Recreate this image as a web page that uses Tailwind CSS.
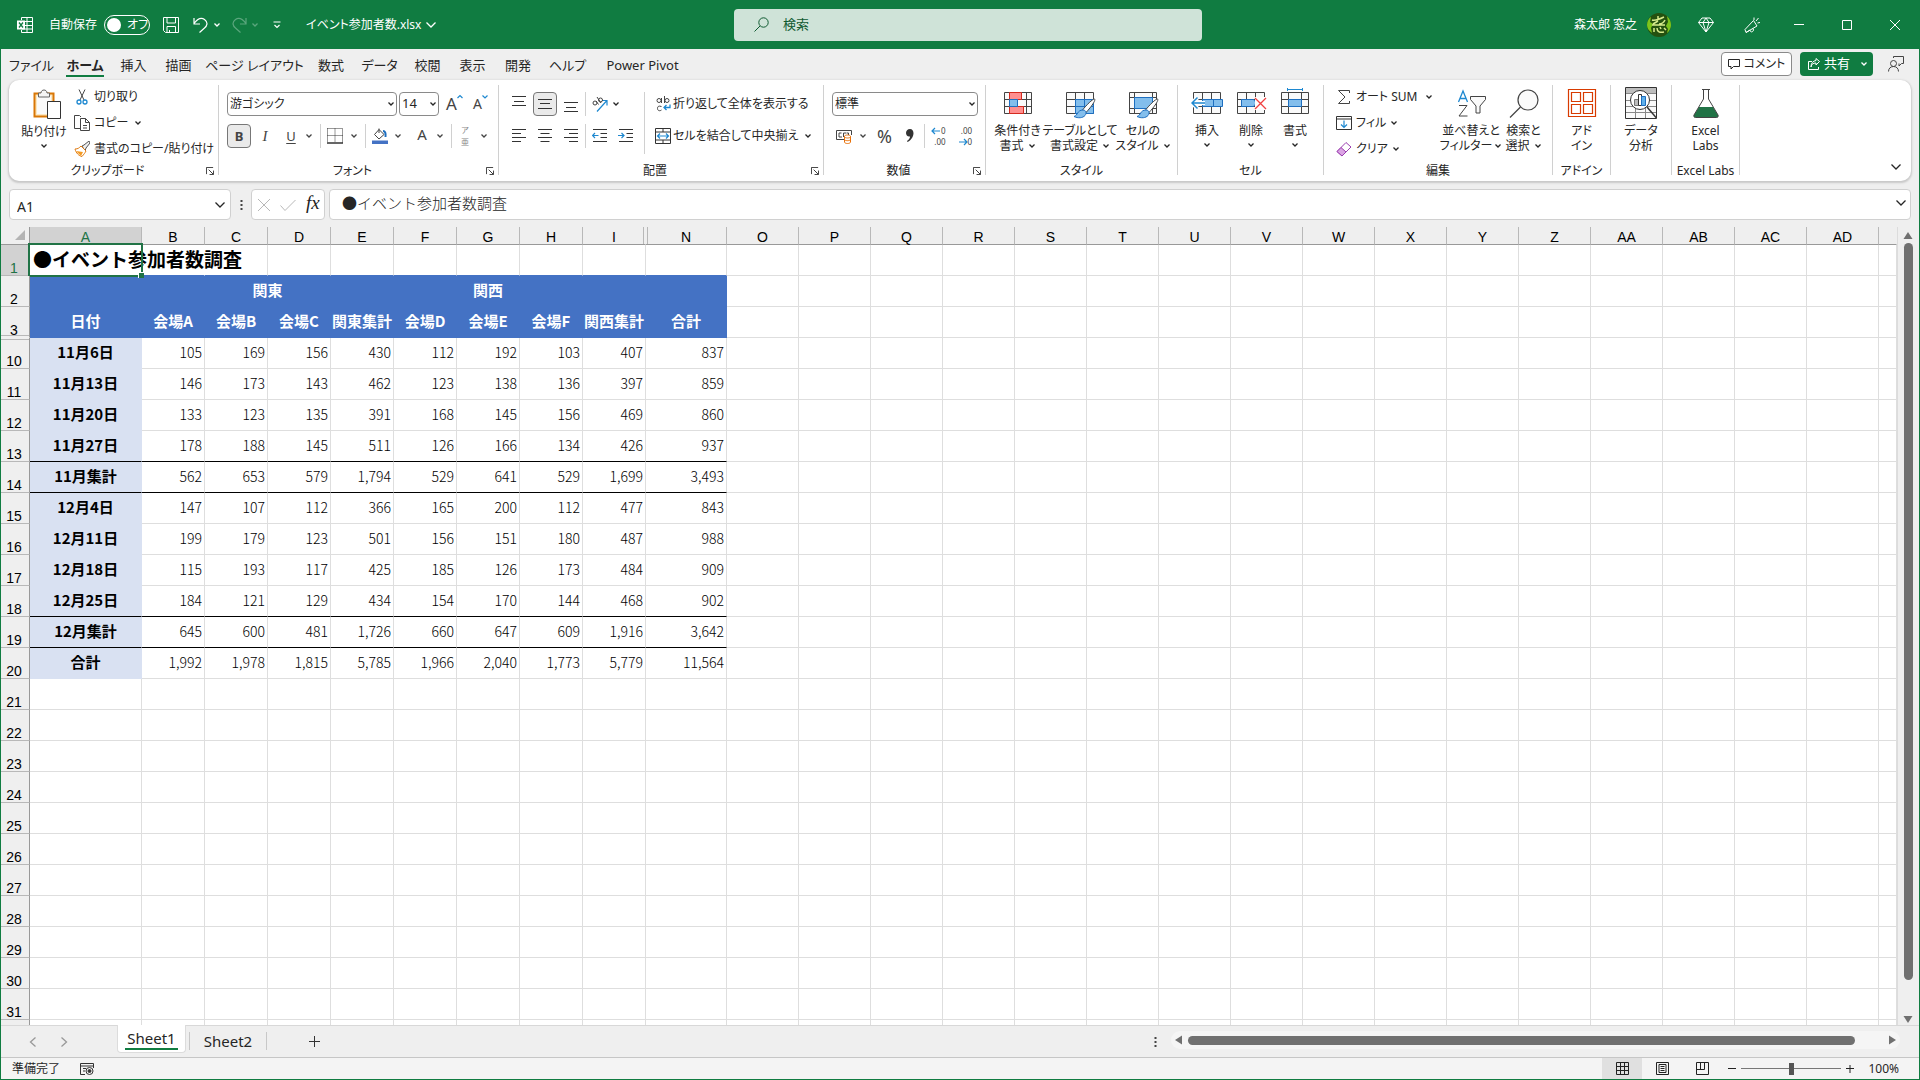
<!DOCTYPE html>
<html lang="ja">
<head>
    <meta charset="UTF-8">
    <meta name="viewport" content="width=device-width, initial-scale=1.0">
    <title>イベント参加者数.xlsx - Excel</title>
    <script src="https://cdn.jsdelivr.net/npm/@tailwindcss/browser@4"></script>
</head>
<body class="h-screen overflow-hidden bg-[#efefef] font-['Noto_Sans','Noto_Sans_CJK_JP',sans-serif] text-xs text-[#262626] [font-feature-settings:'palt'] whitespace-nowrap">

<!-- shared symbols -->
<svg class="hidden">
    <symbol id="chev" viewBox="0 0 8 8"><path d="M1.5 2.5 4 5l2.5-2.5" fill="none" stroke="currentColor" stroke-width="1.3"/></symbol>
    <symbol id="chev-lg" viewBox="0 0 12 12"><path d="M1.500 3.500 6 8l4.500-4.500" fill="none" stroke="currentColor" stroke-width="1.3"/></symbol>
    <symbol id="launcher" viewBox="0 0 9 9"><path d="M.5 8V.5H8M3 3l5 5M8.500 4v4.500H4" fill="none" stroke="currentColor"/></symbol>
</svg>

<div class="flex h-full flex-col border-x border-b border-[#107c41]">

    <!-- title bar -->
    <header class="flex h-[49px] shrink-0 items-center bg-[#107c41] text-white [&>*]:shrink-0">
        <div class="flex w-[733px] items-center pl-4">
            <svg class="size-4" viewBox="0 0 16 16" fill="none" stroke="#fff"><path d="M4.500 3V.5h11v15h-11V13M10 .5v15M4.500 4.500h11M8 8.500h7.500M4.500 12h11"/><path d="M0 3.500h8v9H0z" fill="#fff" stroke="none"/><path d="m2 5.500 4 5M6 5.500l-4 5" stroke="#107c41" stroke-width="1.3"/></svg>
            <label class="ml-4 flex items-center gap-[7px]">自動保存
                <input type="checkbox" class="peer sr-only">
                <span class="flex h-5 w-[46px] items-center gap-1.5 rounded-full border border-white pl-[2px]"><span class="size-3.5 rounded-full bg-white"></span>オフ</span>
            </label>
            <button aria-label="上書き保存" class="ml-[13px]"><svg class="size-4" viewBox="0 0 16 16" fill="none" stroke="#fff"><path d="M.5.5h15v15h-13l-2-2zM4 .5V6h8.500V.5M4 15.500V9.500h8.500v6M6.500 15.500V13"/></svg></button>
            <button aria-label="元に戻す" class="ml-3.5 flex items-center gap-1"><svg class="h-4 w-4" viewBox="0 0 16 16" fill="none" stroke="#fff" stroke-width="1.200"><path d="M1 1v6h6M1 6.500C4 2.500 8 0 11.500 2.500c4 3 2.500 6.500 0 8.500L6.500 15.500"/></svg><svg class="size-2"><use href="#chev"/></svg></button>
            <button aria-label="やり直し" class="ml-2.5 flex items-center gap-1 text-[#5ba67d]"><svg class="h-4 w-4" viewBox="0 0 16 16" fill="none" stroke="currentColor" stroke-width="1.200"><path d="M15 1v6H9M15 6.500C12 2.500 8 0 4.500 2.500c-4 3-2.500 6.500 0 8.500l5 4.500"/></svg><svg class="size-2"><use href="#chev"/></svg></button>
            <button aria-label="クイック アクセス ツール バーのカスタマイズ" class="ml-3.5"><svg class="h-2 w-2" viewBox="0 0 8 8" fill="none" stroke="#fff" stroke-width="1.200"><path d="M.5 1h7M1.500 4 4 6.500 6.500 4"/></svg></button>
            <button class="ml-[25px] flex items-center gap-1">イベント参加者数.xlsx<svg class="size-3"><use href="#chev-lg"/></svg></button>
        </div>
        <label class="flex h-8 w-[468px] items-center rounded bg-[#cfe3d8] pl-5 text-[#0f5a31]">
            <svg class="size-[15px]" viewBox="0 0 15 15" fill="none" stroke="currentColor"><circle cx="9.500" cy="5.500" r="4.700"/><path d="M6 9 .5 14.500"/></svg>
            <input type="text" aria-label="検索" placeholder="検索" class="ml-3.5 grow bg-transparent text-[13px] outline-none placeholder:text-[#0f5a31]">
        </label>
        <div class="ml-auto flex items-center pr-[19px]">
            <span>森太郎 窓之</span>
            <svg class="ml-2.5 size-6" viewBox="0 0 24 24"><circle cx="12" cy="12" r="12" fill="#24510f"/><path d="M0 12c0-4 2-7 4-8l-1 5 3 2-2 4 1 5C2 18 0 15 0 12zM20 3c3 3 4 6 4 9s-2 7-4 8l1-4-2-3 2-4z" fill="#7cc41c"/><path d="M5 7c4 1 8-1 12-3M11 3v4M6 11l5-3M12 11c3 0 5-2 6-4M5 12h13M7 15v4M10 15c0 4 3 5 7 4M13 14l1 2M17 15l2 2" stroke="#d6ea8c" stroke-width="1.500" fill="none"/></svg>
            <button aria-label="Premium" class="ml-[27px]"><svg class="size-4" viewBox="0 0 16 16" fill="none" stroke="#fff"><path d="M4 1h8l3.500 4.500L8 15 .5 5.500zM.5 5.500h15M5 5.500 8 15l3-9.500L8 1 5 5.500z"/></svg></button>
            <button aria-label="新機能" class="ml-[30px]"><svg class="size-4" viewBox="0 0 16 16" fill="none" stroke="#fff"><path d="M9.500 3.500 1 12.500l1 3 11-6.500zM2 15.500l4-2.500c0 2.500 3 2.500 3.500 0l-.5-1.500M10 3V.5M12 4l2.500-3M13.500 6l2.500-.5"/></svg></button>
            <button aria-label="最小化" class="ml-[34px]"><svg class="size-2.5" viewBox="0 0 10 10"><path d="M0 4.500h10" stroke="#fff"/></svg></button>
            <button aria-label="最大化" class="ml-[38px]"><svg class="size-2.5" viewBox="0 0 10 10"><path d="M.5.5h9v9h-9z" stroke="#fff" fill="none"/></svg></button>
            <button aria-label="閉じる" class="ml-[38px]"><svg class="size-2.5" viewBox="0 0 10 10"><path d="m0 0 10 10M10 0 0 10" stroke="#fff"/></svg></button>
        </div>
    </header>

    <!-- ribbon tabs -->
    <nav class="flex h-[31px] shrink-0 items-start pl-[3px] pt-[3px] text-[13px]">
        <div class="flex pt-px leading-6 [&>a]:text-center">
            <a href="#" class="w-[55px]">ファイル</a>
            <a href="#" class="flex w-[52px] justify-center font-bold"><span class="h-6 border-b-2 border-[#107c41]">ホーム</span></a>
            <a href="#" class="w-[45px]">挿入</a>
            <a href="#" class="w-[45px]">描画</a>
            <a href="#" class="w-[107px]">ページ レイアウト</a>
            <a href="#" class="w-[46px]">数式</a>
            <a href="#" class="w-[51px]">データ</a>
            <a href="#" class="w-[45px]">校閲</a>
            <a href="#" class="w-[45px]">表示</a>
            <a href="#" class="w-[46px]">開発</a>
            <a href="#" class="w-[53px]">ヘルプ</a>
            <a href="#" class="w-[97px]">Power Pivot</a>
        </div>
        <div class="ml-auto flex items-center pr-[15px] text-xs">
            <button class="flex h-6 w-[71px] items-center justify-center gap-1 rounded border border-[#8a8a8a] bg-white"><svg class="size-3" viewBox="0 0 12 12" fill="none" stroke="currentColor"><path d="M.5 1.500h11v7H5.500L3 11V8.500H.5z"/></svg>コメント</button>
            <button class="ml-2 flex h-6 w-[73px] items-center gap-1 rounded bg-[#107c41] pl-2 text-[13px] text-white"><svg class="size-3" viewBox="0 0 12 12" fill="none" stroke="#fff"><path d="M4 3.500H.5v8h10V9M3 9c.5-3 2-4 5-4V7l3.500-3.500L8 .5v2C5 3 3 5 3 9z"/></svg>共有<svg class="ml-1.5 size-2"><use href="#chev"/></svg></button>
            <button aria-label="ユーザー" class="ml-[15px]"><svg class="size-4" viewBox="0 0 16 16" fill="none" stroke="#444"><circle cx="5.500" cy="7.500" r="3"/><path d="M.5 15.500c0-3 2-5 5-5s5 2 5 5M5.500 2V.5h10v7h-2L11 10V7.500"/></svg></button>
        </div>
    </nav>

    <!-- ribbon -->
    <section class="mx-2 flex h-[101px] shrink-0 rounded-[10px] bg-white shadow-[0_1px_2px_1px_#c8c8c8] [&>hr]:mt-[5px] [&>hr]:h-[90px] [&>hr]:w-px [&>hr]:border-0 [&>hr]:bg-[#d0d0d0] [&_button]:shrink-0">

        <!-- clipboard -->
        <div class="flex w-[209px] flex-col pt-1">
            <div class="flex h-[78px]">
                <button class="flex w-14 flex-col items-center pl-3.5 pt-[5px] leading-4">
                    <svg class="ml-1.5 h-[31px] w-7 shrink-0" viewBox="0 0 28 31"><path d="M1.500 4.500h19v23h-19z" fill="#fce8c0" stroke="#d97706" stroke-width="2"/><path d="M4 7h14v18H4z" fill="#fafafa"/><path d="M5.500 8V4H8c0-4 6-4 6 0h2.500v4z" fill="#f5f5f5" stroke="#666"/><path d="M14.500 12.500h13v17h-13z" fill="#fff" stroke="#333"/></svg>
                    <span class="mt-1">貼り付け</span>
                    <svg class="mt-0.5 size-2 shrink-0"><use href="#chev"/></svg>
                </button>
                <div class="ml-[9px] flex flex-col [&>button]:flex [&>button]:h-[26px] [&>button]:items-center">
                    <button><svg class="mr-1 size-4" viewBox="0 0 16 16" fill="none" stroke="#444"><path d="m5 .5 5 10.500M11 .5 6 11"/><g stroke="#1e88d0" stroke-width="1.300"><circle cx="5" cy="13" r="2"/><circle cx="11" cy="13" r="2"/></g></svg>切り取り</button>
                    <button><svg class="mr-1 size-4" viewBox="0 0 16 16" fill="#fff" stroke="#444"><path d="M6 13.500H.5V.5h5L7 2"/><path d="M6.500 3.500h5l4 4v8h-9zM11.500 3.500v4h4M9 10.500h4M9 13h4"/></svg>コピー<svg class="ml-1.5 size-2"><use href="#chev"/></svg></button>
                    <button><svg class="mr-1 size-4" viewBox="0 0 16 16" fill="none"><path d="m8 5 2-1 5-4 1 2-4 5-1 3z" fill="#eee" stroke="#555"/><path d="M1 8c3 0 4-1 6-3l5 5c-1 2-2 3-4 5.500C5 15 2 12 1 8z" fill="#fff" stroke="#e07a10"/><path d="m2 10 7 1-2 4z" fill="#f59a23"/></svg>書式のコピー/貼り付け</button>
                </div>
            </div>
            <div class="flex items-center pr-1 leading-[18px]"><span class="grow text-center">クリップボード</span><svg class="size-2"><use href="#launcher"/></svg></div>
        </div>
        <hr>

        <!-- font -->
        <div class="flex w-[279px] flex-col pt-1">
            <div class="flex h-[78px] flex-col gap-2 pl-2 pt-2">
                <div class="flex h-6 items-center">
                    <div class="relative"><select aria-label="フォント" class="h-6 w-[170px] appearance-none rounded border border-[#8a8a8a] pl-0.5"><option>游ゴシック</option></select><svg class="absolute right-0.5 top-2 size-2"><use href="#chev"/></svg></div>
                    <div class="relative ml-0.5"><select aria-label="フォント サイズ" class="h-6 w-10 appearance-none rounded border border-[#8a8a8a] pl-0.5 text-[13px]"><option>14</option></select><svg class="absolute right-0.5 top-2 size-2"><use href="#chev"/></svg></div>
                    <button class="ml-[7px] flex text-[17px] leading-5 text-[#444]">A<svg class="size-1.5" viewBox="0 0 6 6"><path d="m.5 4 2.500-2.500L5.500 4" fill="none" stroke="#1e88d0" stroke-width="1.200"/></svg></button>
                    <button class="ml-2.5 flex text-[14px] leading-5 text-[#444]">A<svg class="size-1.5" viewBox="0 0 6 6"><path d="M.5 1.500 3 4l2.500-2.500" fill="none" stroke="#1e88d0" stroke-width="1.200"/></svg></button>
                </div>
                <div class="flex h-6 items-center text-[#444] [&>i]:h-6 [&>i]:w-px [&>i]:bg-[#d0d0d0]">
                    <button class="h-6 w-6 rounded border border-[#777] bg-[#eaeaea] text-[13px] leading-5 font-bold">B</button>
                    <button class="ml-2.5 w-2 font-['Liberation_Serif'] text-[15px] leading-5 italic">I</button>
                    <button class="ml-[17px] w-2.5 text-[13px] leading-5 underline underline-offset-2">U</button>
                    <svg class="ml-[9px] size-2"><use href="#chev"/></svg>
                    <i class="ml-[7px]"></i>
                    <button aria-label="罫線" class="ml-1.5"><svg class="size-4" viewBox="0 0 16 16" fill="none" stroke="#333"><path d="M.5.5h15v14M.5.5v14M8 .5v14M.5 7.500h15" stroke-dasharray="1 1"/><path d="M0 15h16" stroke-width="1.500"/></svg></button>
                    <svg class="ml-[7px] size-2"><use href="#chev"/></svg>
                    <i class="ml-[7px]"></i>
                    <button aria-label="塗りつぶしの色" class="ml-1.5"><svg class="size-4" viewBox="0 0 16 16" fill="none"><path d="m7 1.500 5 5-5 4.500-4.500-4.500zM7 5V.5" stroke="#444"/><path d="M11 3c2 0 3 2 2.500 6" stroke="#1e6fc0" stroke-width="2"/><path d="M0 12.500h16V16H0z" fill="#4472c4"/></svg></button>
                    <svg class="ml-1.5 size-2"><use href="#chev"/></svg>
                    <button class="ml-3.5 w-3 pb-1 text-[15px] leading-5">A</button>
                    <svg class="ml-2 size-2"><use href="#chev"/></svg>
                    <i class="ml-[7px]"></i>
                    <button class="ml-1.5 flex w-3.5 flex-col items-center text-[8px] leading-3 text-[#888]"><span>ア</span><span>亜</span></button>
                    <svg class="ml-2 size-2"><use href="#chev"/></svg>
                </div>
            </div>
            <div class="flex items-center pr-1 leading-[18px]"><span class="grow text-center">フォント</span><svg class="size-2"><use href="#launcher"/></svg></div>
        </div>
        <hr>

        <!-- alignment -->
        <div class="flex w-[324px] flex-col pt-1">
            <div class="flex h-[78px] pt-2">
                <div class="flex w-[86px] flex-col gap-2">
                    <div class="flex h-6 items-center gap-0.5 pl-2 [&_svg]:size-4 [&>button]:flex [&>button]:size-6 [&>button]:items-center [&>button]:justify-center">
                        <button aria-label="上揃え"><svg viewBox="0 0 16 16" stroke="#333"><path d="M1 .5h14M3 5.500h10M1 9.500h14" /></svg></button>
                        <button aria-label="上下中央揃え" class="rounded border border-[#777] bg-[#eaeaea]"><svg viewBox="0 0 16 16" stroke="#333"><path d="M1 3.500h14M3 7.500h10M1 12.500h14"/></svg></button>
                        <button aria-label="下揃え"><svg viewBox="0 0 16 16" stroke="#333"><path d="M1 6.500h14M3 11.500h10M1 15.500h14"/></svg></button>
                    </div>
                    <div class="flex h-6 items-center gap-0.5 pl-2 [&_svg]:size-4 [&>button]:flex [&>button]:size-6 [&>button]:items-center [&>button]:justify-center">
                        <button aria-label="左揃え"><svg viewBox="0 0 16 16" stroke="#333"><path d="M1 1.500h14M1 5.500h9M1 9.500h14M1 13.500h9"/></svg></button>
                        <button aria-label="中央揃え"><svg viewBox="0 0 16 16" stroke="#333"><path d="M1 1.500h14M3.500 5.500h9M1 9.500h14M3.500 13.500h9"/></svg></button>
                        <button aria-label="右揃え"><svg viewBox="0 0 16 16" stroke="#333"><path d="M1 1.500h14M6 5.500h9M1 9.500h14M6 13.500h9"/></svg></button>
                    </div>
                </div>
                <div class="flex w-[59px] flex-col gap-2 [&>div]:border-l [&>div]:border-[#d0d0d0]">
                    <div class="flex h-6 items-center gap-1 pl-1.5"><button aria-label="方向"><svg class="size-4" viewBox="0 0 16 16" fill="none"><path d="M5 15.500 14.500 5M10 4.500h5v5" stroke="#1e88d0" stroke-width="1.200"/><g stroke="#444"><circle cx="3" cy="7" r="2"/><path d="m4 5 2.500 3.500M5 1l4 6"/><circle cx="8.500" cy="4" r="2"/></g></svg></button><svg class="size-2"><use href="#chev"/></svg></div>
                    <div class="flex h-6 items-center gap-2.5 pl-1.5">
                        <button aria-label="インデントを減らす"><svg class="size-4" viewBox="0 0 16 16" fill="none" stroke="#333"><path d="M1 1.500h14M8.500 5.500H15M8.500 9.500H15M1 13.500h14"/><path d="M6.500 7.500h-6M3 5 .5 7.500 3 10" stroke="#1e88d0" stroke-width="1.200"/></svg></button>
                        <button aria-label="インデントを増やす"><svg class="size-4" viewBox="0 0 16 16" fill="none" stroke="#333"><path d="M1 1.500h14M8.500 5.500H15M8.500 9.500H15M1 13.500h14"/><path d="M0 7.500h6M3.500 5 6 7.500 3.500 10" stroke="#1e88d0" stroke-width="1.200"/></svg></button>
                    </div>
                </div>
                <div class="flex h-[62px] grow flex-col gap-2 border-l border-[#d0d0d0] pl-2.5">
                    <button class="flex h-6 items-center gap-0.5"><svg class="size-4" viewBox="0 0 16 16" fill="none" stroke="#444"><circle cx="4" cy="4.500" r="2"/><path d="M6.500 2v5M9.500 0v7M6.500 10.500c-3-1-4 0-4 2s2 3 4 1.500"/><circle cx="12" cy="4.500" r="2"/><path d="M15 8.500v3H9M11.500 9 9 11.500l2.500 2.500" stroke="#1e88d0" stroke-width="1.300"/></svg>折り返して全体を表示する</button>
                    <button class="flex h-6 items-center gap-0.5"><svg class="size-4" viewBox="0 0 16 16" fill="none" stroke="#333"><path d="M.5.500h15v15H.5zM8 .5V4M8 12v3.500M.5 4h15M.5 12h15"/><path d="M2.500 8h11M5 5.500 2.500 8 5 10.500M11 5.500 13.500 8 11 10.500" stroke="#1e88d0" stroke-width="1.200"/></svg>セルを結合して中央揃え<svg class="ml-1 size-2"><use href="#chev"/></svg></button>
                </div>
            </div>
            <div class="flex items-center pr-1 leading-[18px]"><span class="grow text-center">配置</span><svg class="size-2"><use href="#launcher"/></svg></div>
        </div>
        <hr>

        <!-- number -->
        <div class="flex w-[161px] flex-col pt-1">
            <div class="flex h-[78px] flex-col gap-2 pl-2 pt-2">
                <div class="relative w-[146px]"><select aria-label="表示形式" class="h-6 w-full appearance-none rounded border border-[#8a8a8a] pl-0.5"><option>標準</option></select><svg class="absolute right-0.5 top-2 size-2"><use href="#chev"/></svg></div>
                <div class="flex h-6 items-center pl-1 text-[#444]">
                    <button aria-label="通貨表示形式"><svg class="size-4" viewBox="0 0 16 16" fill="none" stroke="#444"><path d="M8 11.500H.5v-9h15V7M5.500 5H3v4h3M7.500 9V5H10M12.500 7V5h-2"/><path d="M8.500 8.500c0-2 6-2 6 0v5.500c0 2-6 2-6 0zM8.500 8.500c0 2 6 2 6 0M8.500 11.500c0 1.500 6 1.500 6 0" fill="#fff" stroke="#e8710a"/></svg></button>
                    <svg class="ml-[7px] size-2"><use href="#chev"/></svg>
                    <button class="ml-2.5 text-[18px] leading-6">%</button>
                    <button aria-label="桁区切り" class="ml-3.5"><svg class="h-3.5 w-2" viewBox="0 0 8 14"><path d="M4 0c5 0 5 9-2.500 13l-.5-1c2-1.500 3-3 3-4.500C1.500 8 0 6 0 4s1.500-4 4-4z" fill="#333"/></svg></button>
                    <span class="ml-2.5 h-6 w-px bg-[#d0d0d0]"></span>
                    <button aria-label="小数点以下の表示桁数を増やす" class="ml-1.5 flex flex-col items-end text-[8px] leading-[11px]"><span class="flex items-center"><svg class="h-2 w-2.5" viewBox="0 0 10 8"><path d="M9 4H1M4 1 1 4l3 3" fill="none" stroke="#1e88d0" stroke-width="1.200"/></svg>0</span><span>.00</span></button>
                    <button aria-label="小数点以下の表示桁数を減らす" class="ml-3 flex flex-col items-end text-[8px] leading-[11px]"><span>.00</span><span class="flex items-center"><svg class="h-2 w-2.5" viewBox="0 0 10 8"><path d="M1 4h8M6 1l3 3-3 3" fill="none" stroke="#1e88d0" stroke-width="1.200"/></svg>0</span></button>
                </div>
            </div>
            <div class="flex items-center pr-1 leading-[18px]"><span class="grow text-center">数値</span><svg class="size-2"><use href="#launcher"/></svg></div>
        </div>
        <hr>

        <!-- styles -->
        <div class="flex w-[191px] flex-col pt-1">
            <div class="flex h-[78px] pl-0.5 [&>button]:flex [&>button]:flex-col [&>button]:items-center [&>button]:pt-1 [&>button]:leading-[15px]">
                <button class="w-[59px]">
                    <svg class="mb-[3px] h-8 w-8 shrink-0" viewBox="0 0 32 32" fill="none" stroke="#444"><path d="M2.500 4.500h27v21h-27zM2.500 11.500h27M2.500 18.500h27M7.500 4.500v21M24.500 4.500v21" fill="#fafafa"/><path d="M7.500 4.500h12v7h-12zM7.500 18.500h14v7h-14z" fill="#ff8f8f" stroke="#d42a1e"/><path d="M7.500 11.500h8v7h-8z" fill="#83beec" stroke="#1e6fc0"/></svg>
                    <span>条件付き</span><span class="flex items-center gap-1">書式<svg class="size-2"><use href="#chev"/></svg></span>
                </button>
                <button class="w-[66px]">
                    <svg class="mb-[3px] h-8 w-8 shrink-0" viewBox="0 0 32 32" fill="none" stroke="#444"><path d="M2.500 4.500h27v21h-27zM2.500 11.500h27M2.500 18.500h27M11.500 4.500v21M20.500 4.500v21" fill="#fafafa"/><path d="M11.500 11.500h18v14h-18zM11.500 18.500h18M20.500 11.500v14" fill="#83beec" stroke="#1e6fc0"/><path d="M30.500 11c2 1-5 10-9 14l-3-3c4-5 10-11 12-11z" fill="#fff"/><path d="M19 22c3 0 4 3 2 5.500-2 2.500-7 3-11 1 4-1 3-6.500 9-6.500z" fill="#83beec" stroke="#1e6fc0"/></svg>
                    <span>テーブルとして</span><span class="flex items-center gap-1">書式設定<svg class="size-2"><use href="#chev"/></svg></span>
                </button>
                <button class="w-[60px]">
                    <svg class="mb-[3px] h-8 w-8 shrink-0" viewBox="0 0 32 32" fill="none" stroke="#444"><path d="M2.500 4.500h27v21h-27zM2.500 9.500h27M2.500 20.500h27M7.500 4.500v21M25.500 4.500v21" fill="#fafafa"/><path d="M7.500 9.500h18v11h-18z" fill="#83beec" stroke="#1e6fc0"/><path d="M30.500 11c2 1-5 10-9 14l-3-3c4-5 10-11 12-11z" fill="#fff"/><path d="M19 22c3 0 4 3 2 5.500-2 2.500-7 3-11 1 4-1 3-6.500 9-6.500z" fill="#83beec" stroke="#1e6fc0"/></svg>
                    <span>セルの</span><span class="flex items-center gap-1">スタイル<svg class="size-2"><use href="#chev"/></svg></span>
                </button>
            </div>
            <div class="text-center leading-[18px]">スタイル</div>
        </div>
        <hr>

        <!-- cells -->
        <div class="flex w-[145px] flex-col pt-1">
            <div class="flex h-[78px] pl-[7px] [&>button]:flex [&>button]:w-11 [&>button]:flex-col [&>button]:items-center [&>button]:pt-1 [&>button]:leading-4">
                <button>
                    <svg class="mb-[3px] h-8 w-8 shrink-0" viewBox="0 0 32 32" fill="none" stroke="#444"><path d="M2.500 4.500h27v21h-27zM2.500 11.500h27M2.500 18.500h27M11.500 4.500v21M20.500 4.500v21" fill="#fafafa"/><path d="M11.500 11.500h20v7h-20zM22.500 11.500v7" fill="#83beec" stroke="#1e6fc0"/><path d="M14 15H1M6.500 9.500 1 15l5.500 5.500" stroke="#fff" stroke-width="4"/><path d="M14 15H1M6.500 9.500 1 15l5.500 5.500" stroke="#1e88d0" stroke-width="1.500"/></svg>
                    挿入<svg class="mt-0.5 size-2 shrink-0"><use href="#chev"/></svg>
                </button>
                <button>
                    <svg class="mb-[3px] h-8 w-8 shrink-0" viewBox="0 0 32 32" fill="none" stroke="#444"><path d="M2.500 4.500h27v21h-27zM2.500 11.500h27M2.500 18.500h27M11.500 4.500v7M20.500 4.500v7M11.500 18.500v7M20.500 18.500v7" fill="#fafafa"/><path d="M6.500 11.500h12l3 3.500-3 3.500h-12z" fill="#83beec" stroke="#1e6fc0"/><path d="M20 9h12v13H20z" fill="#fff" stroke="none"/><path d="m20 10 11 11M31 10 20 21" stroke="#f04040" stroke-width="1.300"/></svg>
                    削除<svg class="mt-0.5 size-2 shrink-0"><use href="#chev"/></svg>
                </button>
                <button>
                    <svg class="mb-[3px] h-8 w-8 shrink-0" viewBox="0 0 32 32" fill="none" stroke="#444"><path d="M2.500 4.500h27v21h-27zM2.500 11.500h27M2.500 18.500h27M9.500 4.500v21M22.500 4.500v21" fill="#fafafa"/><path d="M9.500 11.500h13v7h-13z" fill="#83beec" stroke="#1e6fc0"/><path d="M8.500 0v3M23.500 0v3M8.500 1.500h15" stroke="#1e88d0"/></svg>
                    書式<svg class="mt-0.5 size-2 shrink-0"><use href="#chev"/></svg>
                </button>
            </div>
            <div class="text-center leading-[18px]">セル</div>
        </div>
        <hr>

        <!-- editing -->
        <div class="flex w-[228px] flex-col pt-1">
            <div class="flex h-[78px] pl-3">
                <div class="flex w-[105px] flex-col [&>button]:flex [&>button]:h-[26px] [&>button]:items-center [&>button]:gap-1">
                    <button><svg class="size-4" viewBox="0 0 16 16" fill="none" stroke="#444"><path d="M13.500 4V1.500H2.500L9 8l-6.500 6.500h11V12"/></svg>オート SUM<svg class="ml-1 size-2"><use href="#chev"/></svg></button>
                    <button><svg class="size-4" viewBox="0 0 16 16" fill="none" stroke="#333"><path d="M.5 1.500h15v13H.5zM.5 4h15"/><path d="M8 5.500V12M5 9.500l3 3 3-3" stroke="#1e88d0" stroke-width="1.200"/></svg>フィル<svg class="size-2"><use href="#chev"/></svg></button>
                    <button><svg class="size-4" viewBox="0 0 16 16" fill="#fff" stroke="#9b3fb0"><path d="M10 1.500 15 6l-9 9-5-4.500z"/><path d="m5 6.500 5 4.500-4 4-5-4.500z" fill="#dba4e4"/></svg>クリア<svg class="size-2"><use href="#chev"/></svg></button>
                </div>
                <button class="flex w-[60px] flex-col items-center pt-1 leading-[15px]">
                    <svg class="mb-[3px] h-8 w-8 shrink-0" viewBox="0 0 32 32" fill="none" stroke="#444"><path d="m3.500 14 4.500-11 4.500 11M5 10.500h6" stroke="#1e88d0" stroke-width="1.300"/><path d="M4 17.500h8l-8 10.500h8.500"/><path d="M15.500 8.500h15v3L25 18v7h-4v-7l-5.500-6.500z" fill="#fafafa"/></svg>
                    <span>並べ替えと</span><span class="flex items-center gap-0.5">フィルター<svg class="size-2"><use href="#chev"/></svg></span>
                </button>
                <button class="flex w-[45px] flex-col items-center pt-1 leading-[15px]">
                    <svg class="mb-[3px] h-8 w-8 shrink-0" viewBox="0 0 32 32" fill="none" stroke="#444" stroke-width="1.200"><circle cx="20" cy="12" r="10" fill="#fafafa"/><path d="M12.500 19 2 29.500"/></svg>
                    <span>検索と</span><span class="flex items-center gap-1">選択<svg class="size-2"><use href="#chev"/></svg></span>
                </button>
            </div>
            <div class="text-center leading-[18px]">編集</div>
        </div>
        <hr>

        <!-- add-ins -->
        <div class="flex w-[57px] flex-col pt-1">
            <button class="flex h-[78px] flex-col items-center pt-1 leading-[15px]">
                <svg class="mb-[3px] h-8 w-8 shrink-0" viewBox="0 0 32 32" fill="none" stroke="#d83b01" stroke-width="1.200"><path d="M2.500 1.500h27v27h-27zM5.500 4.500h9v9h-9zM17.500 4.500h9v9h-9zM5.500 16.500h9v9h-9zM17.500 16.500h9v9h-9z"/></svg>
                <span>アド</span><span>イン</span>
            </button>
            <div class="text-center leading-[18px]">アドイン</div>
        </div>
        <hr>
        <div class="flex w-[60px] flex-col pt-1">
            <button class="flex h-[78px] flex-col items-center pt-[3px] leading-[15px]">
                <svg class="mb-1 h-8 w-8 shrink-0" viewBox="0 0 32 32" fill="none" stroke="#888"><path d="M.5.5h31v31H.5z" fill="#fafafa" stroke="#333"/><path d="M1 1h30v5H1z" fill="#bdbdbd" stroke="none"/><path d="M1 6.500h30M1 13.500h30M1 19.500h30M1 25.500h30M10.500 20v11M20.500 20v11"/><circle cx="15" cy="13" r="9.500" fill="#fff" stroke="#333"/><path d="m22 20 9.500 11" stroke="#333" stroke-width="1.500"/><path d="M9.500 12.500h4v6h-4z" fill="#bbb" stroke="#777"/><path d="M13.500 7.500h3v11h-3z" fill="#fff" stroke="#333"/><path d="M16.500 9.500h4v9h-4z" fill="#5fb0ea" stroke="#1e6fc0"/></svg>
                <span>データ</span><span>分析</span>
            </button>
        </div>
        <hr>
        <div class="flex w-[67px] flex-col pt-1">
            <button class="flex h-[78px] flex-col items-center pt-1 leading-[15px]">
                <svg class="mb-[3px] h-8 w-8 shrink-0" viewBox="0 0 32 32" fill="none"><path d="M9 19h14l5 8c.5 1.500 0 2.500-1.500 2.500h-21C4 29.500 3.500 28 4 27z" fill="#217346"/><path d="M12 1.500h8M13.500 1.500V11L4 27c-.5 1.500 0 2.500 1.500 2.500h21c1.500 0 2-1 1.500-2.500l-9.500-16V1.500" stroke="#444"/></svg>
                <span>Excel</span><span>Labs</span>
            </button>
            <div class="text-center leading-[18px]">Excel Labs</div>
        </div>
        <hr>
        <button aria-label="リボンを折りたたむ" class="ml-auto mr-[9px] flex items-end pb-2"><svg class="size-3"><use href="#chev-lg"/></svg></button>
    </section>

    <!-- formula bar -->
    <div class="mx-2 mt-2 flex h-[31px] shrink-0">
        <div class="flex w-[222px] items-center rounded border border-[#d0d0d0] bg-white pl-[7px] pr-1">
            <input aria-label="名前ボックス" value="A1" class="w-0 grow pt-1 text-sm outline-none">
            <svg class="size-3"><use href="#chev-lg"/></svg>
        </div>
        <svg class="ml-[9px] mt-2.5 h-3 w-[3px]" viewBox="0 0 3 12"><path d="M.5 1h2v2h-2zM.5 5h2v2h-2zM.5 9h2v2h-2z" fill="#444"/></svg>
        <div class="ml-2 flex w-[74px] items-center gap-2.5 rounded border border-[#d0d0d0] bg-white pl-1.5">
            <button aria-label="キャンセル"><svg class="h-3 w-3" viewBox="0 0 12 12"><path d="m0 0 12 12M12 0 0 12" stroke="#b8b8b8"/></svg></button>
            <button aria-label="入力"><svg class="h-3 w-4" viewBox="0 0 16 12" fill="none"><path d="m.5 6.500 4.500 5L15.500 1" stroke="#b8b8b8"/></svg></button>
            <button class="pb-1 font-['Liberation_Serif'] text-[19px] leading-5 italic text-[#222]">fx</button>
        </div>
        <div class="ml-1 flex grow items-center rounded border border-[#d0d0d0] bg-white pl-3 pr-[3px]">
            <input aria-label="数式バー" value="●イベント参加者数調査" class="w-0 grow pb-1 font-['Noto_Sans_CJK_JP',sans-serif] text-[15px] leading-5 font-light outline-none [font-feature-settings:normal]">
            <svg class="mb-1 size-3"><use href="#chev-lg"/></svg>
        </div>
    </div>

    <!-- grid -->
    <main class="mt-[7px] flex min-h-0 grow">
        <div class="min-w-0 grow overflow-hidden bg-white">
            <table class="w-full table-fixed border-separate border-spacing-0 font-['Noto_Sans_CJK_JP',sans-serif] [font-feature-settings:normal]">
                <colgroup id="cols"></colgroup>
                <thead><tr id="head"></tr></thead>
                <tbody id="body"></tbody>
            </table>
        </div>
        <div class="mr-px flex w-[21px] shrink-0 flex-col items-center gap-0.5 border-l border-[#dcdcdc] pt-1">
            <svg class="h-2.5 w-2.5 shrink-0" viewBox="0 0 10 8"><path d="M5 0l4.500 7h-9z" fill="#707070"/></svg>
            <div class="mb-8 w-[9px] grow rounded-full bg-[#707070]"></div>
            <svg class="mb-px h-2.5 w-2.5 shrink-0" viewBox="0 0 10 8"><path d="M5 8 .5 1h9z" fill="#707070"/></svg>
        </div>
    </main>

    <!-- sheet tabs -->
    <div class="flex h-8 shrink-0 border-t border-[#d8d8d8] text-[15px]">
        <div class="flex w-[116px] items-center gap-[23px] pl-7 text-[#999]">
            <button aria-label="前のシート"><svg class="h-2.5 w-2" viewBox="0 0 8 10"><path d="M6.500.5 1.500 5l5 4.500" fill="none" stroke="currentColor" stroke-width="1.300"/></svg></button>
            <button aria-label="次のシート"><svg class="h-2.5 w-2" viewBox="0 0 8 10"><path d="m1.500.5 5 4.500-5 4.500" fill="none" stroke="currentColor" stroke-width="1.300"/></svg></button>
        </div>
        <button class="-mt-px flex h-7 w-[69px] justify-center rounded-b border border-t-0 border-[#dcdcdc] bg-white pt-px"><span class="h-6 border-b-2 border-[#107c41] px-0.5 leading-6">Sheet1</span></button>
        <span class="ml-[3px] mt-1.5 h-[18px] w-px bg-[#c8c8c8]"></span>
        <button class="h-8 w-[76px] pb-0.5 leading-[30px]">Sheet2</button>
        <span class="mt-1.5 h-[18px] w-px bg-[#c8c8c8]"></span>
        <button aria-label="新しいシート" class="ml-[42px]"><svg class="size-[11px]" viewBox="0 0 11 11"><path d="M5.500 0v11M0 5.500h11" stroke="#333"/></svg></button>
        <svg class="ml-auto mt-2.5 h-3 w-[3px]" viewBox="0 0 3 12"><path d="M.5 1h2v2h-2zM.5 5h2v2h-2zM.5 9h2v2h-2z" fill="#444"/></svg>
        <div class="ml-3.5 mr-[19px] mt-[5px] flex h-[18px] w-[729px] items-center rounded-full bg-[#f5f5f5] px-1">
            <svg class="h-2.5 w-2" viewBox="0 0 8 10"><path d="M0 5 7 .5v9z" fill="#707070"/></svg>
            <div class="ml-[5px] h-[9px] w-[667px] rounded-full bg-[#707070]"></div>
            <svg class="ml-auto h-2.5 w-2" viewBox="0 0 8 10"><path d="M8 5 1 .5v9z" fill="#707070"/></svg>
        </div>
    </div>

    <!-- status bar -->
    <footer class="flex h-[22px] shrink-0 items-center border-t border-[#c6c6c6] bg-[#f4f4f4] pl-[11px]">
        <span>準備完了</span>
        <button aria-label="マクロの記録" class="ml-5"><svg class="h-3 w-3.5" viewBox="0 0 14 12" fill="none" stroke="#333"><path d="M5 11.500H.5V.5h13V5M.5 3h13M3 5.500h3M3 8h2"/><circle cx="9.500" cy="8" r="3.500"/><circle cx="9.500" cy="8" r="1.500" fill="#333"/></svg></button>
        <div class="ml-auto flex h-full items-center">
            <button aria-label="標準" class="flex h-full w-10 items-center justify-center bg-[#e0e0e0]"><svg class="size-[13px]" viewBox="0 0 13 13" fill="none" stroke="#222"><path d="M.5.5h12v12H.5zM4.500.5v12M8.500.5v12M.5 4.500h12M.5 8.500h12"/></svg></button>
            <button aria-label="ページ レイアウト" class="flex w-10 justify-center"><svg class="size-[13px]" viewBox="0 0 13 13" fill="none" stroke="#222"><path d="M.5.5h12v12H.5zM3 2.500h7v8H3zM4.500 4.500h4M4.500 6.500h4M4.500 8.500h4"/></svg></button>
            <button aria-label="改ページ プレビュー" class="flex w-10 justify-center"><svg class="size-[13px]" viewBox="0 0 13 13" fill="none" stroke="#222"><path d="M.5.5h12v12H.5zM4.500.5v7M.5 7.500h8V.5"/></svg></button>
            <button aria-label="縮小" class="ml-1.5"><svg class="size-2" viewBox="0 0 8 8"><path d="M0 3.500h8" stroke="#222"/></svg></button>
            <input type="range" aria-label="ズーム" min="0" max="100" value="50" class="ml-[5px] h-3 w-[100px] appearance-none bg-transparent bg-[linear-gradient(#777,#777)] bg-[length:100%_1px] bg-center bg-no-repeat [&::-webkit-slider-thumb]:h-3 [&::-webkit-slider-thumb]:w-[5px] [&::-webkit-slider-thumb]:appearance-none [&::-webkit-slider-thumb]:bg-[#555]">
            <button aria-label="拡大" class="ml-[5px]"><svg class="size-2" viewBox="0 0 8 8"><path d="M0 3.500h8M4 0v8" stroke="#222"/></svg></button>
            <span class="ml-3.5 mr-5">100%</span>
        </div>
    </footer>
</div>

<script>
    const letters = ['A','B','C','D','E','F','G','H','I','N','O','P','Q','R','S','T','U','V','W','X','Y','Z','AA','AB','AC','AD',''];
    const data = {
        10: ['11月6日', 105, 169, 156, 430, 112, 192, 103, 407, 837],
        11: ['11月13日', 146, 173, 143, 462, 123, 138, 136, 397, 859],
        12: ['11月20日', 133, 123, 135, 391, 168, 145, 156, 469, 860],
        13: ['11月27日', 178, 188, 145, 511, 126, 166, 134, 426, 937],
        14: ['11月集計', 562, 653, 579, 1794, 529, 641, 529, 1699, 3493],
        15: ['12月4日', 147, 107, 112, 366, 165, 200, 112, 477, 843],
        16: ['12月11日', 199, 179, 123, 501, 156, 151, 180, 487, 988],
        17: ['12月18日', 115, 193, 117, 425, 185, 126, 173, 484, 909],
        18: ['12月25日', 184, 121, 129, 434, 154, 170, 144, 468, 902],
        19: ['12月集計', 645, 600, 481, 1726, 660, 647, 609, 1916, 3642],
        20: ['合計', 1992, 1978, 1815, 5785, 1966, 2040, 1773, 5779, 11564]
    };
    const ruled = [13, 14, 18, 19];

    // column widths
    let cols = '<col class="w-[29px]">';
    letters.forEach((l, i) => {
        let w = 'w-[72px]';
        if (i === 0) w = 'w-[112px]';
        else if (i < 9) w = 'w-[63px]';
        else if (i === 9) w = 'w-[81px]';
        else if (l === '') w = '';
        cols += `<col class="${w}">`;
    });
    document.getElementById('cols').innerHTML = cols;

    // column headings
    const thBase = "relative h-[18px] border-b border-r border-b-[#999] p-0 pt-[3px] font-['Liberation_Sans'] text-sm leading-[14px] font-normal";
    let head = `<th class="${thBase} border-r-[#999] bg-[#efefef]"><svg class="absolute right-1 bottom-1 size-2.5" viewBox="0 0 10 10"><path d="M10 0v10H0z" fill="#b4b4b4"/></svg></th>`;
    letters.forEach(l => {
        let c = 'border-r-[#b8b8b8] bg-[#efefef] text-black';
        if (l === 'A') c = 'border-r-[#b8b8b8] bg-[#d2d2d2] text-[#217346]';
        // hidden columns sit between I and N
        if (l === 'I') c = "border-r-[#efefef] bg-[#efefef] text-black after:absolute after:inset-y-0 after:right-px after:w-px after:bg-[#b8b8b8]";
        if (l === 'N') c = "border-r-[#b8b8b8] bg-[#efefef] text-black before:absolute before:inset-y-0 before:left-px before:w-px before:bg-[#b8b8b8]";
        if (l === '') c = 'border-r-[#efefef] bg-[#efefef]';
        head += `<th class="${thBase} ${c}">${l}</th>`;
    });
    document.getElementById('head').innerHTML = head;

    const td = 'h-[31px] border-b border-r p-0 pb-0.5 ';
    const plain = td + 'border-[#dedede]';
    const blue = td + 'border-[#4472c4] bg-[#4472c4] text-center text-[15px] leading-5 font-bold text-white';

    function rowHead(n) {
        let c = 'border-b-[#b8b8b8] bg-[#efefef] text-black';
        if (n === 1) c = 'border-b-[#b8b8b8] bg-[#d2d2d2] text-[#217346]';
        // rows 4-9 are hidden
        if (n === 3) c = 'border-b-[#efefef] bg-[#efefef] text-black after:absolute after:inset-x-0 after:bottom-px after:h-px after:bg-[#b8b8b8]';
        if (n === 10) c = 'border-b-[#b8b8b8] bg-[#efefef] text-black before:absolute before:inset-x-0 before:top-px before:h-px before:bg-[#b8b8b8]';
        return `<th class="relative h-[31px] border-b border-r border-r-[#999] p-0 pr-0.5 align-bottom font-['Liberation_Sans'] text-sm leading-[14px] font-normal ${c}">${n > 31 ? '' : n}</th>`;
    }

    function cells(n) {
        let out = '';
        if (n === 1) {
            out += `<td class="${td} relative border-r-white border-b-[#4472c4] pl-[3px] text-[19px] leading-6 font-bold text-black">●イベント参加者数調査
                <span class="absolute -inset-0.5 border-2 border-[#217346]"></span>
                <span class="absolute -right-[3px] -bottom-[3px] size-1.5 border-t border-l border-white bg-[#217346]"></span></td>`;
            out += `<td class="${td} border-r-white border-b-[#4472c4]"></td>`;
            for (let i = 2; i < 10; i++) out += `<td class="${td} border-r-[#dedede] border-b-[#4472c4]"></td>`;
        } else if (n === 2) {
            out += `<td class="${blue}"></td><td class="${blue}" colspan="4">関東</td><td class="${blue}" colspan="3">関西</td><td class="${blue}"></td><td class="${blue}"></td>`;
        } else if (n === 3) {
            ['日付', '会場A', '会場B', '会場C', '関東集計', '会場D', '会場E', '会場F', '関西集計', '合計'].forEach(t => {
                out += `<td class="${blue}">${t}</td>`;
            });
        } else if (data[n]) {
            const line = ruled.includes(n);
            data[n].forEach((v, i) => {
                if (i === 0) {
                    out += `<td class="${td} ${line ? 'border-b-black' : 'border-b-[#d9e1f2]'} border-r-[#d9e1f2] bg-[#d9e1f2] text-center text-[15px] leading-5 font-bold text-black">${v}</td>`;
                } else {
                    out += `<td class="${td} ${line ? 'border-b-black' : 'border-b-[#dedede]'} border-r-[#dedede] pr-0.5 text-right text-sm font-light text-black">${v.toLocaleString('en-US')}</td>`;
                }
            });
        } else {
            for (let i = 0; i < 10; i++) out += `<td class="${plain}"></td>`;
        }
        for (let i = 10; i < letters.length; i++) out += `<td class="${plain}"></td>`;
        return out;
    }

    const rows = [1, 2, 3];
    for (let n = 10; n <= 32; n++) rows.push(n);
    document.getElementById('body').innerHTML = rows.map(n => `<tr>${rowHead(n)}${cells(n)}</tr>`).join('');
</script>
</body>
</html>
